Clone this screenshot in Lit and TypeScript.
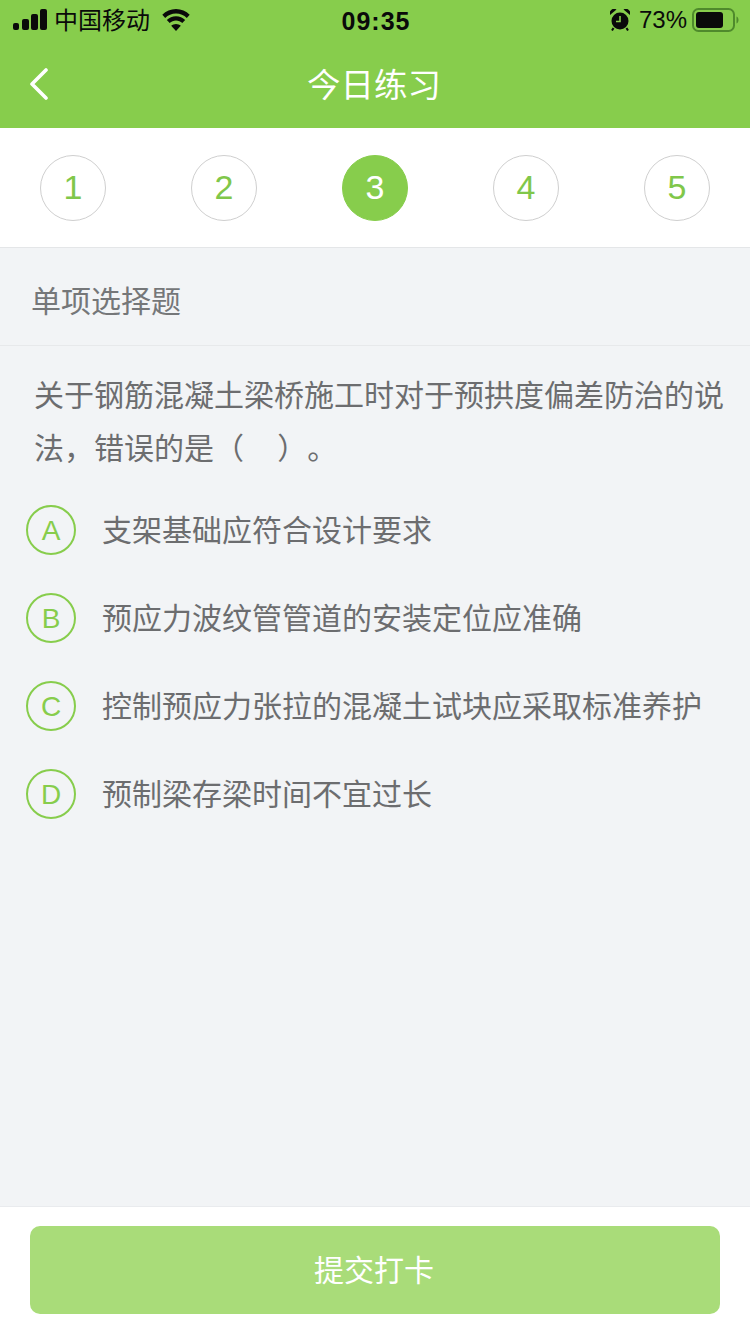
import { LitElement, html, css } from 'lit'
import { customElement } from 'lit/decorators.js'

const options = [
  { key: 'A', text: '支架基础应符合设计要求' },
  { key: 'B', text: '预应力波纹管管道的安装定位应准确' },
  { key: 'C', text: '控制预应力张拉的混凝土试块应采取标准养护' },
  { key: 'D', text: '预制梁存梁时间不宜过长' },
]

@customElement('app-root')
export class AppRoot extends LitElement {
  static styles = css`
    :host {
      display: flex;
      flex-direction: column;
      height: 1334px;
      overflow: hidden;
      background: #f2f4f6;
      font-family: 'Liberation Sans', 'Noto Sans CJK SC', sans-serif;
      text-spacing-trim: space-all;
    }

    .header {
      height: 128px;
      flex: none;
      background: #87cd4c;
      display: flex;
      flex-direction: column;
    }

    .status {
      height: 40px;
      display: flex;
      align-items: center;
      justify-content: space-between;
      padding: 0 11px 0 13px;
      color: #0a0a0a;
      font-size: 24px;
    }

    .status-side {
      flex: 1;
      display: flex;
      align-items: center;
    }

    .status-side.right {
      justify-content: flex-end;
    }

    .carrier {
      margin-left: 7px;
      margin-right: 11px;
      padding-bottom: 4px;
    }

    .time {
      font-weight: 700;
      font-size: 25px;
      letter-spacing: 1px;
      padding-top: 2px;
    }

    .battery-text {
      margin: 0 5px 0 9px;
      font-size: 24px;
    }

    .nav {
      flex: 1;
      position: relative;
      display: flex;
      align-items: center;
      justify-content: center;
      color: #fff;
      font-size: 33.500px;
      padding: 0 2px 4px 0;
    }

    .back {
      position: absolute;
      left: 29px;
      top: 28px;
    }

    .steps {
      flex: none;
      height: 119px;
      background: #fff;
      border-bottom: 1px solid #e4e6e8;
      display: flex;
      align-items: center;
      justify-content: space-between;
      padding: 0 40px;
    }

    .step {
      width: 66px;
      height: 66px;
      box-sizing: border-box;
      border: 1px solid #cfcfcf;
      border-radius: 50%;
      display: flex;
      align-items: center;
      justify-content: center;
      color: #80c74a;
      font-size: 34px;
    }

    .step.active {
      background: #87cd4c;
      border-color: #87cd4c;
      color: #fff;
    }

    .type {
      flex: none;
      height: 98px;
      box-sizing: border-box;
      border-bottom: 1px solid #e7e9eb;
      padding: 4px 0 0 31px;
      display: flex;
      align-items: center;
      color: #757779;
      font-size: 30px;
    }

    .main {
      flex: 1;
    }

    .question {
      margin: 0;
      padding: 23px 20px 0 34px;
      color: #6c6d6f;
      font-size: 30px;
      line-height: 53px;
    }

    .options {
      margin-top: 30px;
      padding-left: 26px;
      display: flex;
      flex-direction: column;
      gap: 38px;
    }

    .option {
      height: 50px;
      display: flex;
      align-items: center;
      color: #6c6d6f;
      font-size: 30px;
    }

    .option span {
      padding-bottom: 4px;
    }

    .letter {
      flex: none;
      width: 50px;
      height: 50px;
      box-sizing: border-box;
      border: 2px solid #87cd4c;
      border-radius: 50%;
      margin-right: 26px;
      padding-top: 2px;
      display: flex;
      align-items: center;
      justify-content: center;
      color: #87cd4c;
      font-size: 28px;
    }

    .footer {
      flex: none;
      height: 128px;
      box-sizing: border-box;
      background: #fff;
      border-top: 1px solid #e9ebee;
      padding: 19px 30px 20px;
    }

    .submit {
      height: 88px;
      box-sizing: border-box;
      padding: 0 2px 4px 0;
      border-radius: 10px;
      background: #a9dc79;
      color: #fff;
      font-size: 30px;
      display: flex;
      align-items: center;
      justify-content: center;
    }
  `

  render() {
    return html`
      <div class="header">
        <div class="status">
          <div class="status-side">
            <svg width="34" height="22" viewBox="0 0 34 22" fill="#0a0a0a">
              <rect x="0" y="14" width="6" height="7" rx="2" />
              <rect x="9" y="10" width="7" height="11" rx="2" />
              <rect x="18" y="5" width="7" height="16" rx="2" />
              <rect x="27" y="0" width="7" height="21" rx="2" />
            </svg>
            <span class="carrier">中国移动</span>
            <svg width="30" height="22" viewBox="0 0 30 22" fill="#0a0a0a">
              <path d="M15 4.500c4.200 0 8 1.700 10.800 4.400l2.900-3.100C25.100 2.200 20.300 0 15 0S4.900 2.200 1.300 5.800l2.900 3.100C7 6.200 10.800 4.500 15 4.500z" />
              <path d="M15 11.500c2.400 0 4.600.9 6.300 2.500l2.900-3.100C21.800 8.600 18.600 7.200 15 7.200s-6.800 1.400-9.200 3.700l2.900 3.100c1.700-1.600 3.900-2.500 6.300-2.500z" />
              <path d="M15 22l4.800-5.200c-1.300-1.100-3-1.800-4.800-1.800s-3.500.7-4.800 1.800z" />
            </svg>
          </div>
          <span class="time">09:35</span>
          <div class="status-side right">
            <svg width="20" height="22" viewBox="0 0 20 22" fill="#0a0a0a">
              <circle cx="10" cy="12" r="8.500" />
              <path d="M0 6a4.500 4.500 0 0 1 6.500-5.500zM20 6a4.500 4.500 0 0 0-6.500-5.500z" />
              <path d="M3.500 19l-1.500 2.500M16.500 19l1.500 2.500" stroke="#0a0a0a" stroke-width="2" />
              <path d="M10 7v5.500H6" stroke="#87cd4c" stroke-width="1.600" fill="none" />
            </svg>
            <span class="battery-text">73%</span>
            <svg width="47" height="24" viewBox="0 0 47 24">
              <rect x="1" y="1" width="41" height="22" rx="5.500" fill="none" stroke="#4f8a2c" stroke-width="2" />
              <rect x="4" y="4" width="27" height="16" rx="3" fill="#0a0a0a" />
              <path d="M44.500 8.500c1.500.6 2 2 2 3.500s-.5 2.900-2 3.500z" fill="#4f8a2c" />
            </svg>
          </div>
        </div>
        <div class="nav">
          <svg class="back" width="20" height="32" viewBox="0 0 20 32" fill="none" stroke="#fff" stroke-width="3.600" stroke-linecap="round" stroke-linejoin="round">
            <path d="M17 2L3 16l14 14" />
          </svg>
          今日练习
        </div>
      </div>
      <div class="steps">
        ${[1, 2, 3, 4, 5].map(
          (n) => html`<div class="step ${n === 3 ? 'active' : ''}">${n}</div>`
        )}
      </div>
      <div class="type">单项选择题</div>
      <div class="main">
        <p class="question">关于钢筋混凝土梁桥施工时对于预拱度偏差防治的说法，错误的是（&nbsp;&nbsp;&nbsp;&nbsp;）。</p>
        <div class="options">
          ${options.map(
            (o) => html`
              <div class="option">
                <div class="letter">${o.key}</div>
                <span>${o.text}</span>
              </div>
            `
          )}
        </div>
      </div>
      <div class="footer">
        <div class="submit">提交打卡</div>
      </div>
    `
  }
}

declare global {
  interface HTMLElementTagNameMap {
    'app-root': AppRoot
  }
}
